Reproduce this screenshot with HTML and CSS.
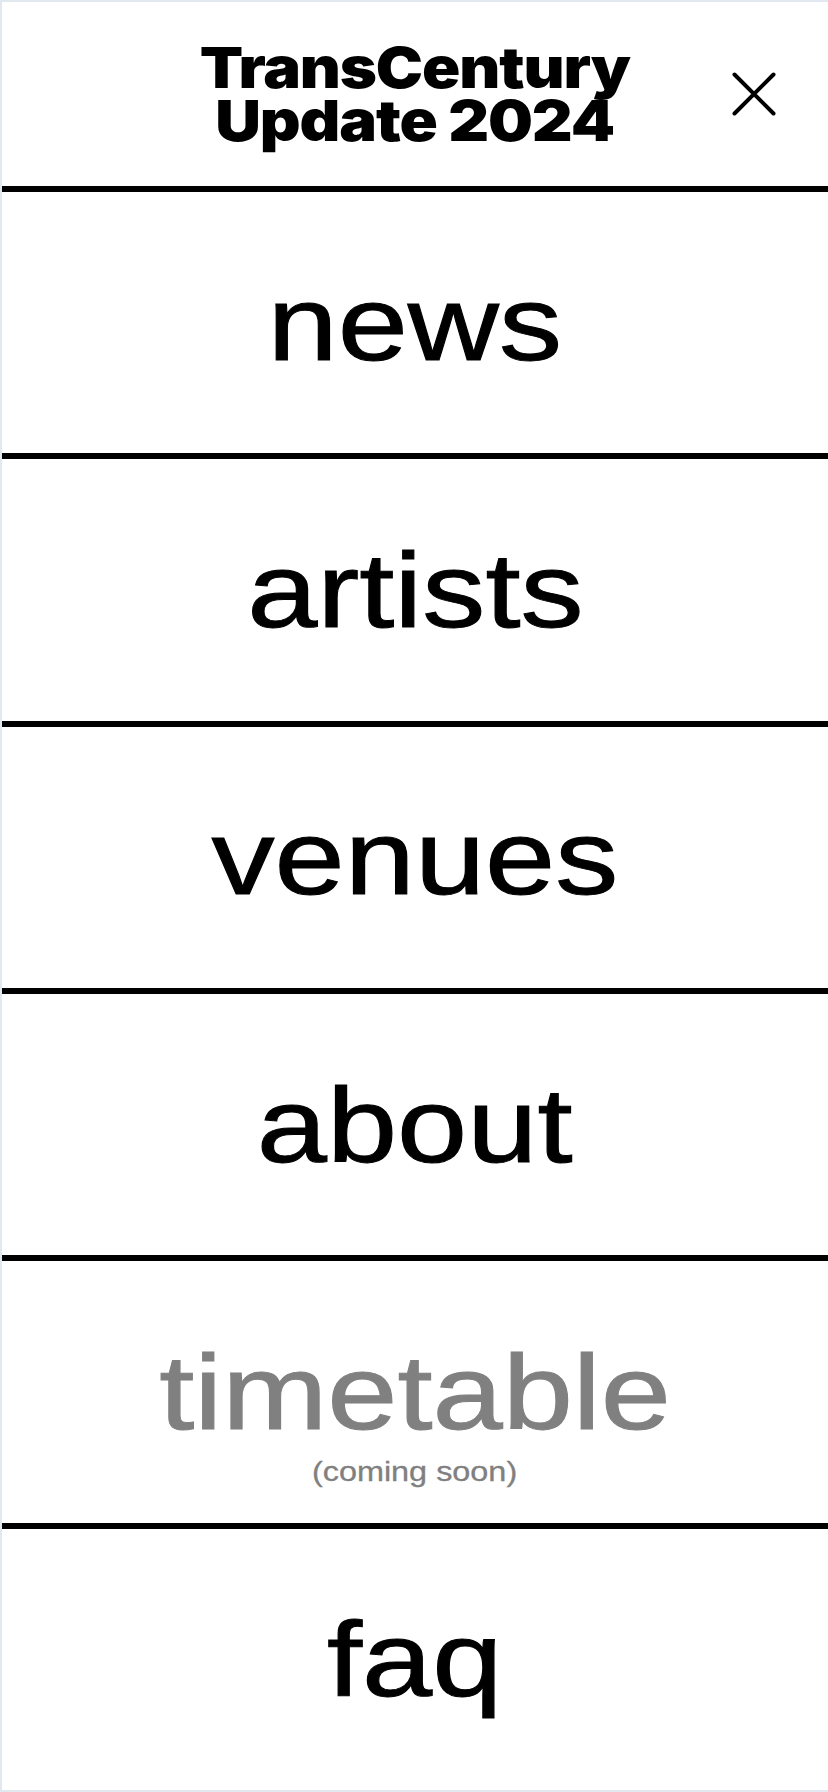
FILE: index.html
```html
<!DOCTYPE html>
<html lang="en">
<head>
<meta charset="utf-8">
<title>TransCentury Update 2024 — Menu</title>
<link rel="stylesheet" href="styles.css">
</head>
<body>
<div class="page">
  <header class="header">
    <div class="spacer"></div>
    <h1 class="title"><span class="title-line">TransCentury</span><span class="title-line">Update 2024</span></h1>
    <button class="close" aria-label="Close menu">
      <svg width="44" height="44" viewBox="0 0 44 44" aria-hidden="true">
        <path d="M2.5 2.5 L41.5 41.5 M41.5 2.5 L2.5 41.5" stroke="#000" stroke-width="4" stroke-linecap="round" fill="none"/>
      </svg>
    </button>
  </header>
  <nav class="menu">
    <a class="item" href="#"><span class="word">news</span></a>
    <a class="item" href="#"><span class="word">artists</span></a>
    <a class="item" href="#"><span class="word">venues</span></a>
    <a class="item" href="#"><span class="word">about</span></a>
    <div class="item item-disabled"><span class="word">timetable</span><span class="note">(coming soon)</span></div>
    <a class="item" href="#"><span class="word">faq</span></a>
  </nav>
</div>
</body>
</html>
```

FILE: styles.css
```css
html, body {
  margin: 0;
  padding: 0;
  background: #ffffff;
}

.page {
  box-sizing: border-box;
  width: 828px;
  height: 1792px;
  border: 2px solid #e2e8f0;
  border-right: 0;
  display: flex;
  flex-direction: column;
  background: #ffffff;
}

.header {
  flex: 0 0 184px;
  display: grid;
  grid-template-columns: 1fr auto 1fr;
  align-items: center;
}

.title {
  margin: 0;
  display: flex;
  flex-direction: column;
  align-items: center;
  font-family: "Inter", "Liberation Sans", sans-serif;
  font-weight: 900;
  font-size: 57px;
  line-height: 53px;
  letter-spacing: -1px;
  color: #000;
}

.title-line {
  display: block;
  white-space: nowrap;
  transform: scaleX(1.11);
}

.close {
  justify-self: end;
  margin: 0 52px 0 0;
  padding: 0;
  border: 0;
  background: none;
  width: 44px;
  height: 44px;
  display: flex;
}

.menu {
  flex: 1;
  display: flex;
  flex-direction: column;
}

.item {
  flex: 1;
  border-top: 6px solid #000;
  display: grid;
  grid-template-rows: 1fr auto 1fr;
  justify-items: center;
  text-decoration: none;
  color: #000;
  font-family: "Liberation Sans", Arial, sans-serif;
}

.word {
  grid-row: 2;
  display: inline-block;
  font-size: 106px;
  line-height: 106px;
  transform: scaleX(1.19);
  -webkit-text-stroke: 1px currentColor;
}

.item-disabled {
  color: #808080;
}

.note {
  grid-row: 3;
  align-self: start;
  display: inline-block;
  margin-top: 12px;
  font-size: 27px;
  line-height: 30px;
  transform: scaleX(1.2);
  -webkit-text-stroke: 0.3px currentColor;
}
```
